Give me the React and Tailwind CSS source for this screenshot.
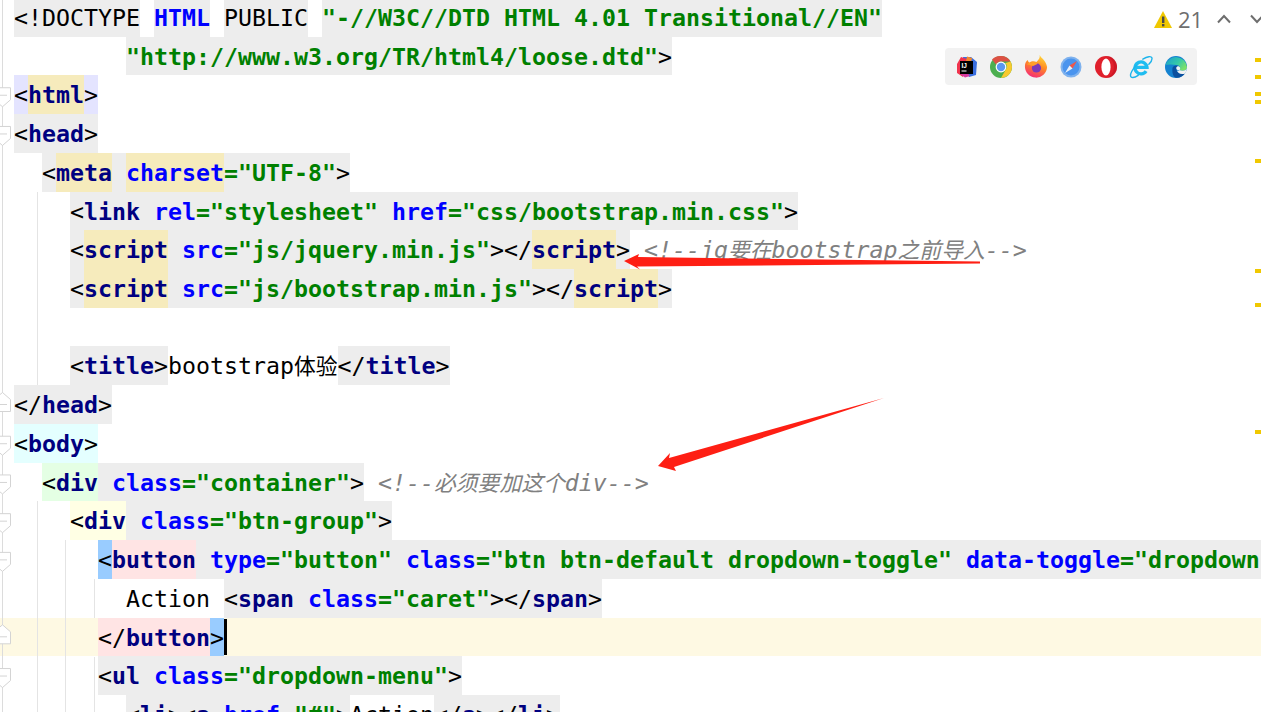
import React from 'react';

// token colours
const K = {
  p: 'text-black',
  t: 'text-[#000080] font-bold',
  a: 'text-[#0000ff] font-bold',
  s: 'text-[#008000] font-bold',
  c: 'text-[#808080] italic',
};

// token backgrounds
const B = {
  g: 'bg-[#ededed]',
  y: 'bg-[#f6ebbc]',
  l: 'bg-[#e4e4ff]',
  c: 'bg-[#e4ffff]',
  m: 'bg-[#e4ffe4]',
  v: 'bg-[#ffffe4]',
  r: 'bg-[#ffe4e4]',
  b: 'bg-[#99ccff]',
};

const Cjk = ({ children }) => <span className="text-[21.8px]">{children}</span>;

const lines = [
  [['<!DOCTYPE', 'p', 'g'], [' '], ['HTML', 'a', 'g'], [' '], ['PUBLIC', 'p', 'g'], [' '], ['"-//W3C//DTD HTML 4.01 Transitional//EN"', 's', 'g']],
  [['        '], ['"http://www.w3.org/TR/html4/loose.dtd"', 's', 'g'], ['>', 'p', 'g']],
  [['<', 'p', 'l'], ['html', 't', 'y'], ['>', 'p', 'l']],
  [['<', 'p', 'g'], ['head', 't', 'g'], ['>', 'p', 'g']],
  [['  '], ['<', 'p', 'g'], ['meta', 't', 'y'], [' ', 'p', 'g'], ['charset', 'a', 'y'], ['="UTF-8"', 's', 'g'], ['>', 'p', 'g']],
  [['    '], ['<', 'p', 'g'], ['link', 't', 'g'], [' ', 'p', 'g'], ['rel', 'a', 'g'], ['="stylesheet"', 's', 'g'], [' ', 'p', 'g'], ['href', 'a', 'g'], ['="css/bootstrap.min.css"', 's', 'g'], ['>', 'p', 'g']],
  [['    '], ['<', 'p', 'g'], ['script', 't', 'y'], [' ', 'p', 'g'], ['src', 'a', 'g'], ['="js/jquery.min.js"', 's', 'g'], ['></', 'p', 'g'], ['script', 't', 'y'], ['>', 'p', 'g'], [' '],
    [<>{'<!--jq'}<Cjk>要在</Cjk>bootstrap<Cjk>之前导入</Cjk>{'-->'}</>, 'c']],
  [['    '], ['<', 'p', 'g'], ['script', 't', 'y'], [' ', 'p', 'g'], ['src', 'a', 'g'], ['="js/bootstrap.min.js"', 's', 'g'], ['></', 'p', 'g'], ['script', 't', 'y'], ['>', 'p', 'g']],
  [],
  [['    '], ['<', 'p', 'g'], ['title', 't', 'g'], ['>', 'p', 'g'], [<>bootstrap<Cjk>体验</Cjk></>, 'p'], ['</', 'p', 'g'], ['title', 't', 'g'], ['>', 'p', 'g']],
  [['</', 'p', 'g'], ['head', 't', 'g'], ['>', 'p', 'g']],
  [['<', 'p', 'c'], ['body', 't', 'c'], ['>', 'p', 'c']],
  [['  '], ['<', 'p', 'm'], ['div', 't', 'm'], [' ', 'p', 'g'], ['class', 'a', 'g'], ['="container"', 's', 'g'], ['>', 'p', 'g'], [' '],
    [<>{'<!--'}<Cjk>必须要加这个</Cjk>{'div-->'}</>, 'c']],
  [['    '], ['<', 'p', 'v'], ['div', 't', 'v'], [' ', 'p', 'g'], ['class', 'a', 'g'], ['="btn-group"', 's', 'g'], ['>', 'p', 'g']],
  [['      '], ['<', 'p', 'b'], ['button', 't', 'r'], [' ', 'p', 'g'], ['type', 'a', 'g'], ['="button"', 's', 'g'], [' ', 'p', 'g'], ['class', 'a', 'g'], ['="btn btn-default dropdown-toggle"', 's', 'g'], [' ', 'p', 'g'], ['data-toggle', 'a', 'g'], ['="dropdown"', 's', 'g']],
  [['        '], ['Action ', 'p'], ['<', 'p', 'g'], ['span', 't', 'g'], [' ', 'p', 'g'], ['class', 'a', 'g'], ['="caret"', 's', 'g'], ['></', 'p', 'g'], ['span', 't', 'g'], ['>', 'p', 'g']],
  [['      '], ['</', 'p', 'r'], ['button', 't', 'r'], ['>', 'p', 'b']],
  [['      '], ['<', 'p', 'g'], ['ul', 't', 'g'], [' ', 'p', 'g'], ['class', 'a', 'g'], ['="dropdown-menu"', 's', 'g'], ['>', 'p', 'g']],
  [['        '], ['<', 'p', 'g'], ['li', 't', 'g'], ['><', 'p', 'g'], ['a', 't', 'g'], [' ', 'p', 'g'], ['href', 'a', 'g'], ['="#"', 's', 'g'], ['>', 'p', 'g'], ['Action', 'p'], ['</', 'p', 'g'], ['a', 't', 'g'], ['></', 'p', 'g'], ['li', 't', 'g'], ['>', 'p', 'g']],
];

const CURRENT_LINE = 16;

const CodeLine = ({ tokens, current }) => (
  <div className={`h-[38.72px] pl-[14px] whitespace-pre ${current ? 'bg-[#fef9e3]' : ''}`}>
    {tokens.map(([text, kind, bg], i) => (
      <span key={i} className={`inline-block h-[38.72px] pt-[1px] align-top ${kind ? K[kind] : ''} ${bg ? B[bg] : ''}`}>
        {text}
      </span>
    ))}
    {current && <span className="inline-block w-[3px] h-[36px] mt-[1px] align-top bg-black" />}
  </div>
);

// fold markers + indent guides in the gutter
const foldOpen = [2, 3, 11, 12, 13, 14, 17];
const foldClose = [10, 16];
const lineTop = (i) => i * 38.72 - 1.7;

const Gutter = () => (
  <svg className="absolute left-0 top-0 pointer-events-none" width="100" height="712" fill="none">
    <path d="M2.5 0V712" stroke="#dcdcdc" />
    <path d="M37.5 192V385M37.5 501V712M65.5 540V712M94.5 579V618M94.5 657V712" stroke="#e4e4e4" />
    {foldOpen.map((i) => {
      const y = lineTop(i) + 12;
      return (
        <g key={i} stroke="#d4d4d4" fill="#fff">
          <path d={`M-6 ${y}H10.5V${y + 12}L2.5 ${y + 19}L-6 ${y + 12}Z`} />
          <path d={`M-2 ${y + 7.5}H7`} />
        </g>
      );
    })}
    {foldClose.map((i) => {
      const y = lineTop(i) + 7;
      return (
        <g key={i} stroke="#d4d4d4" fill="#fff">
          <path d={`M2.5 ${y}L10.5 ${y + 7}V${y + 19}H-6V${y + 7}Z`} />
          <path d={`M-2 ${y + 12}H7`} />
        </g>
      );
    })}
  </svg>
);

const Arrows = () => (
  <svg className="absolute left-0 top-0 pointer-events-none" width="1261" height="712">
    <path d="M624 261L639 254L638 257L980 261.5V263.5L637 266.5L640 269.5Z" fill="#fe1f14" />
    <path d="M658 466L670 453L669 458L884 398L674 467L676 471Z" fill="#fe1f14" />
  </svg>
);

const IdeaIcon = () => (
  <svg width="24" height="24" viewBox="0 0 24 24">
    <path d="M9 2L17 2L23 7L22 20L15 22L10 12Z" fill="#3a6fe0" />
    <path d="M3 9L7 2L13 4L9 22L3 18Z" fill="#f0344e" />
    <path d="M6 19L11 22.5L16 21L12 16Z" fill="#d63aa0" />
    <path d="M13 1.5L18 3L17 8L12 6Z" fill="#f58a2c" />
    <rect x="6" y="6" width="13" height="13" fill="#000" />
    <text x="7.5" y="12.5" fill="#fff" fontSize="6.5" fontWeight="700" fontFamily="Liberation Sans, sans-serif">IJ</text>
    <rect x="7.5" y="15.5" width="5" height="1" fill="#fff" />
  </svg>
);

const ChromeIcon = () => (
  <svg width="24" height="24" viewBox="0 0 24 24">
    <circle cx="12" cy="12" r="11" fill="#4caf50" />
    <path d="M12 1A11 11 0 0 1 21.5 6.5H12A5.5 5.5 0 0 0 7 9.5L3 4.5A11 11 0 0 1 12 1Z" fill="#dd5144" />
    <path d="M21.5 6.5A11 11 0 0 1 12 23L16.8 14.5A5.5 5.5 0 0 0 16.5 8Z" fill="#f8c92e" />
    <circle cx="12" cy="12" r="5.4" fill="#fff" />
    <circle cx="12" cy="12" r="4.2" fill="#5b97f0" />
  </svg>
);

const FirefoxIcon = () => (
  <svg width="26" height="26" viewBox="0 0 26 26">
    <defs>
      <linearGradient id="ffx" x1="0.7" y1="0" x2="0.3" y2="1">
        <stop offset="0" stopColor="#ffd83a" />
        <stop offset="0.45" stopColor="#ff8a24" />
        <stop offset="1" stopColor="#f5287a" />
      </linearGradient>
    </defs>
    <path d="M17 0C18 3 24 6 25 13A12 12 0 1 1 1 12C1 9 2.5 6.5 4 5.5C4.5 7 5 8 6 8.5C8 6.5 11 6.5 13.5 7.5C16 5 17.5 3 17 0Z" fill="url(#ffx)" />
    <circle cx="13.5" cy="14" r="5" fill="#7a3ab8" />
    <path d="M3 10C7 7 12 7 15 9.5L10 12Z" fill="#ffa028" />
  </svg>
);

const SafariIcon = () => (
  <svg width="24" height="24" viewBox="0 0 24 24">
    <circle cx="12" cy="12" r="10.5" fill="#7fb2ee" />
    <circle cx="12" cy="12" r="8.5" fill="#4a94ee" />
    <path d="M18 6L13.5 13.5L10.5 10.5Z" fill="#f0574a" />
    <path d="M6 18L10.5 10.5L13.5 13.5Z" fill="#e8f0fa" />
  </svg>
);

const OperaIcon = () => (
  <svg width="24" height="24" viewBox="0 0 24 24">
    <circle cx="12" cy="12" r="11" fill="#e0202c" />
    <ellipse cx="12" cy="12" rx="4.6" ry="8.6" fill="#fff" />
    <path d="M12 1A11 11 0 0 1 12 23A11 11 0 0 0 20 12A11 11 0 0 0 12 1Z" fill="#b8101e" opacity="0.45" />
  </svg>
);

const IeIcon = () => (
  <svg width="26" height="26" viewBox="0 0 26 26" fill="none">
    <path d="M6.5 13.5H19.5A6.5 6.5 0 1 0 18.5 17.5" stroke="#20bdf0" strokeWidth="3.6" />
    <path d="M15 4.5C20 1.5 24 1 24.8 3C25.3 5 23.5 8 21.5 10M8 11C4 15 0.5 21 2 23.5C3.5 25 7 24 10 22" stroke="#1cb4ec" strokeWidth="1.5" strokeLinecap="round" />
  </svg>
);

const EdgeIcon = () => (
  <svg width="24" height="24" viewBox="0 0 24 24">
    <defs>
      <linearGradient id="edg" x1="0" y1="0" x2="1" y2="0.6">
        <stop offset="0" stopColor="#1a9ccf" />
        <stop offset="0.6" stopColor="#35c9a8" />
        <stop offset="1" stopColor="#7be06a" />
      </linearGradient>
    </defs>
    <circle cx="12" cy="12" r="11" fill="#1482d0" />
    <path d="M1.5 10A11 11 0 0 1 23 12C23 16 18 16.5 15.5 15C17 13 16 10.5 13 10C8 9 4 9.5 1.5 10Z" fill="url(#edg)" />
    <path d="M8.5 13C9 10.5 12.5 9.5 15 11.5C13 11.5 12 13 12.5 15C13 18 17 20 21 18.5C18 22.5 12.5 24 10 21.5C8.5 19.5 8 16 8.5 13Z" fill="#0b4f9e" />
    <path d="M12.2 13C12.5 11.5 14 11 15 11.5C16.5 12.5 16.5 14 15.5 15C14 15.5 12.6 15 12.2 13Z" fill="#f2f2f2" />
    <path d="M23 12C23 14 22 17 21 18.5C17 20 13.5 18 13 15.5C14 16 15 16 15.5 15C18 16.5 23 16 23 12Z" fill="#f2f2f2" />
  </svg>
);

const stripes = ['top-[58px]', 'top-[75px]', 'top-[92px]', 'top-[100px]', 'top-[159px]', 'top-[269px]', 'top-[303px]', 'top-[430px]'];

export default function App() {
  return (
    <div className="relative w-[1261px] h-[712px] overflow-hidden bg-white font-['DejaVu_Sans_Mono','Noto_Sans_CJK_SC',monospace] text-[23.25px] leading-[38.72px]">
      <div className="-mt-[2px]">
        {lines.map((tokens, i) => (
          <CodeLine key={i} tokens={tokens} current={i === CURRENT_LINE} />
        ))}
      </div>

      <Gutter />
      <Arrows />

      {/* inspection widget */}
      <div className="absolute left-[1154px] top-[7px] flex items-center h-[24px] w-[120px] font-['Open_Sans',sans-serif] text-[22px] leading-none text-[#6e6e6e]">
        <svg width="18" height="17" viewBox="0 0 18 17" className="shrink-0">
          <path d="M9 0L18 17H0Z" fill="#f0c800" />
          <rect x="8" y="5.5" width="2.4" height="6.5" fill="#4a4a4a" />
          <rect x="8" y="13" width="2.4" height="2.4" fill="#4a4a4a" />
        </svg>
        <span className="ml-[6px] w-[24px]">21</span>
        <svg width="14" height="10" viewBox="0 0 14 10" fill="none" className="ml-[15px] shrink-0">
          <path d="M1 8.5L7 2L13 8.5" stroke="#6e6e6e" strokeWidth="2" />
        </svg>
        <svg width="14" height="10" viewBox="0 0 14 10" fill="none" className="ml-[19px] shrink-0">
          <path d="M1 1.5L7 8L13 1.5" stroke="#6e6e6e" strokeWidth="2" />
        </svg>
      </div>

      {/* browser popup */}
      <div className="absolute left-[945px] top-[48px] w-[252px] h-[37px] pl-[9px] flex items-center gap-[11px] bg-[#f2f2f2] rounded">
        <div className="w-6 h-6 flex items-center justify-center"><IdeaIcon /></div>
        <div className="w-6 h-6 flex items-center justify-center"><ChromeIcon /></div>
        <div className="w-6 h-6 flex items-center justify-center"><FirefoxIcon /></div>
        <div className="w-6 h-6 flex items-center justify-center"><SafariIcon /></div>
        <div className="w-6 h-6 flex items-center justify-center"><OperaIcon /></div>
        <div className="w-6 h-6 flex items-center justify-center"><IeIcon /></div>
        <div className="w-6 h-6 flex items-center justify-center"><EdgeIcon /></div>
      </div>

      {/* error stripes */}
      {stripes.map((top) => (
        <div key={top} className={`absolute right-0 w-[6px] h-[4px] bg-[#f0c800] ${top}`} />
      ))}
    </div>
  );
}
